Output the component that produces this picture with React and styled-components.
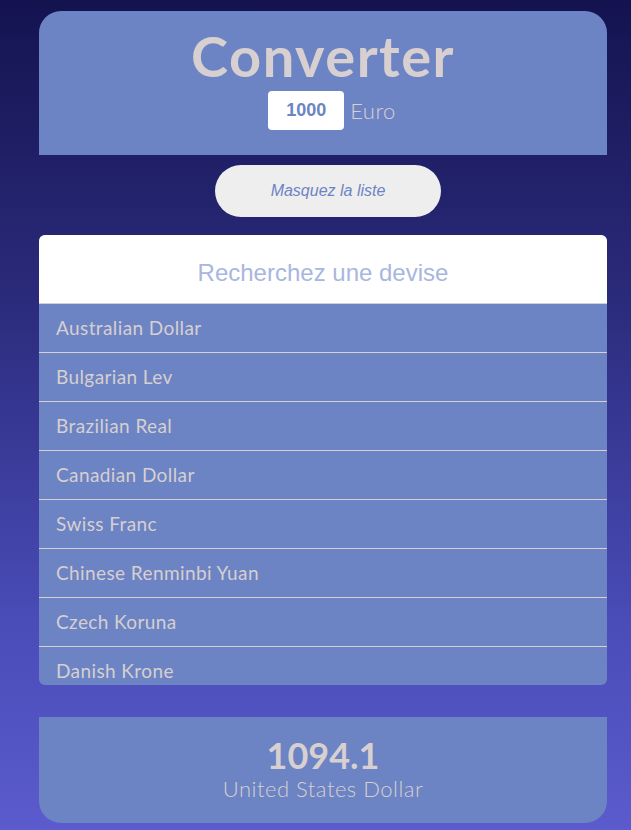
import React from 'react'
import styled, { createGlobalStyle } from 'styled-components'

const GlobalStyle = createGlobalStyle`
  html, body {
    margin: 0;
    padding: 0;
  }
  body {
    font-family: Lato, "Noto Sans", sans-serif;
  }
`

const StyledPage = styled.div`
  min-height: 830px;
  background: linear-gradient(180deg, #141350 0%, #2a2a7a 35%, #4a4cb8 75%, #5b5bcd 100%);
  padding-top: 11px;
  box-sizing: border-box;
  overflow: hidden;
`

const StyledColumn = styled.div`
  width: 568px;
  margin-left: 39px;
  display: flex;
  flex-direction: column;
  align-items: stretch;
`

const StyledHeader = styled.header`
  background: #6c84c4;
  border-radius: 22px 22px 0 0;
  height: 144px;
  box-sizing: border-box;
  padding-top: 13px;
  display: flex;
  flex-direction: column;
  align-items: center;
`

const StyledTitle = styled.h1`
  margin: 0;
  font-family: Lato, sans-serif;
  font-weight: 700;
  font-size: 56px;
  line-height: 64px;
  letter-spacing: 1.5px;
  color: #d7cfd0;
`

const StyledAmountRow = styled.div`
  display: flex;
  align-items: center;
  gap: 6px;
  margin: 3px 0 0 18px;
`

const StyledAmount = styled.input`
  width: 76px;
  height: 39px;
  box-sizing: border-box;
  border: none;
  border-radius: 4px;
  background: #ffffff;
  text-align: center;
  font-family: "Liberation Sans", Arial, sans-serif;
  font-weight: 700;
  font-size: 18px;
  color: #6c84c4;
  outline: none;
`

const StyledCurrency = styled.span`
  font-family: Lato, sans-serif;
  font-weight: 300;
  font-size: 22px;
  letter-spacing: 0.5px;
  color: #d7cfd0;
`

const StyledToggle = styled.button`
  align-self: center;
  width: 226px;
  height: 52px;
  margin: 10px 0 18px 10px;
  border: none;
  border-radius: 26px;
  background: #eeeeee;
  font-family: "Liberation Sans", Arial, sans-serif;
  font-style: italic;
  font-size: 16px;
  color: #6c84c4;
  cursor: pointer;
`

const StyledList = styled.section`
  height: 450px;
  border-radius: 6px;
  overflow: hidden;
  background: #6c84c4;
  display: flex;
  flex-direction: column;
`

const StyledSearch = styled.input`
  flex: 0 0 auto;
  height: 69px;
  box-sizing: border-box;
  border: none;
  border-bottom: 1px solid #d0d0d8;
  background: #ffffff;
  text-align: center;
  font-family: "Liberation Sans", Arial, sans-serif;
  font-size: 24px;
  color: #6c84c4;
  outline: none;
  padding-top: 8px;

  &::placeholder {
    color: #a8b6e0;
  }
`

const StyledRow = styled.div`
  flex: 0 0 auto;
  height: 49px;
  box-sizing: border-box;
  padding: 0 17px 2px;
  display: flex;
  align-items: center;
  border-bottom: 1px solid #d7cfd0;
  font-family: Lato, sans-serif;
  font-size: 19px;
  letter-spacing: 0.4px;
  color: #d7cfd0;
`

const StyledResult = styled.footer`
  margin-top: 32px;
  height: 106px;
  border-radius: 0 0 22px 22px;
  background: #6c84c4;
  display: flex;
  flex-direction: column;
  align-items: center;
  padding-top: 18px;
  box-sizing: border-box;
`

const StyledValue = styled.div`
  font-family: Lato, sans-serif;
  font-weight: 700;
  font-size: 36px;
  line-height: 40px;
  color: #d7cfd0;
`

const StyledValueCurrency = styled.div`
  font-family: Lato, sans-serif;
  font-weight: 300;
  font-size: 22px;
  line-height: 28px;
  letter-spacing: 0.5px;
  color: #d7cfd0;
`

const currencies = [
  'Australian Dollar',
  'Bulgarian Lev',
  'Brazilian Real',
  'Canadian Dollar',
  'Swiss Franc',
  'Chinese Renminbi Yuan',
  'Czech Koruna',
  'Danish Krone'
]

const App = () => (
  <>
    <GlobalStyle />
    <StyledPage>
      <StyledColumn>
        <StyledHeader>
          <StyledTitle>Converter</StyledTitle>
          <StyledAmountRow>
            <StyledAmount defaultValue='1000' />
            <StyledCurrency>Euro</StyledCurrency>
          </StyledAmountRow>
        </StyledHeader>

        <StyledToggle type='button'>Masquez la liste</StyledToggle>

        <StyledList>
          <StyledSearch placeholder='Recherchez une devise' />
          { currencies.map(name => (
            <StyledRow key={ name }>{ name }</StyledRow>
          )) }
        </StyledList>

        <StyledResult>
          <StyledValue>1094.1</StyledValue>
          <StyledValueCurrency>United States Dollar</StyledValueCurrency>
        </StyledResult>
      </StyledColumn>
    </StyledPage>
  </>
)

export default App
